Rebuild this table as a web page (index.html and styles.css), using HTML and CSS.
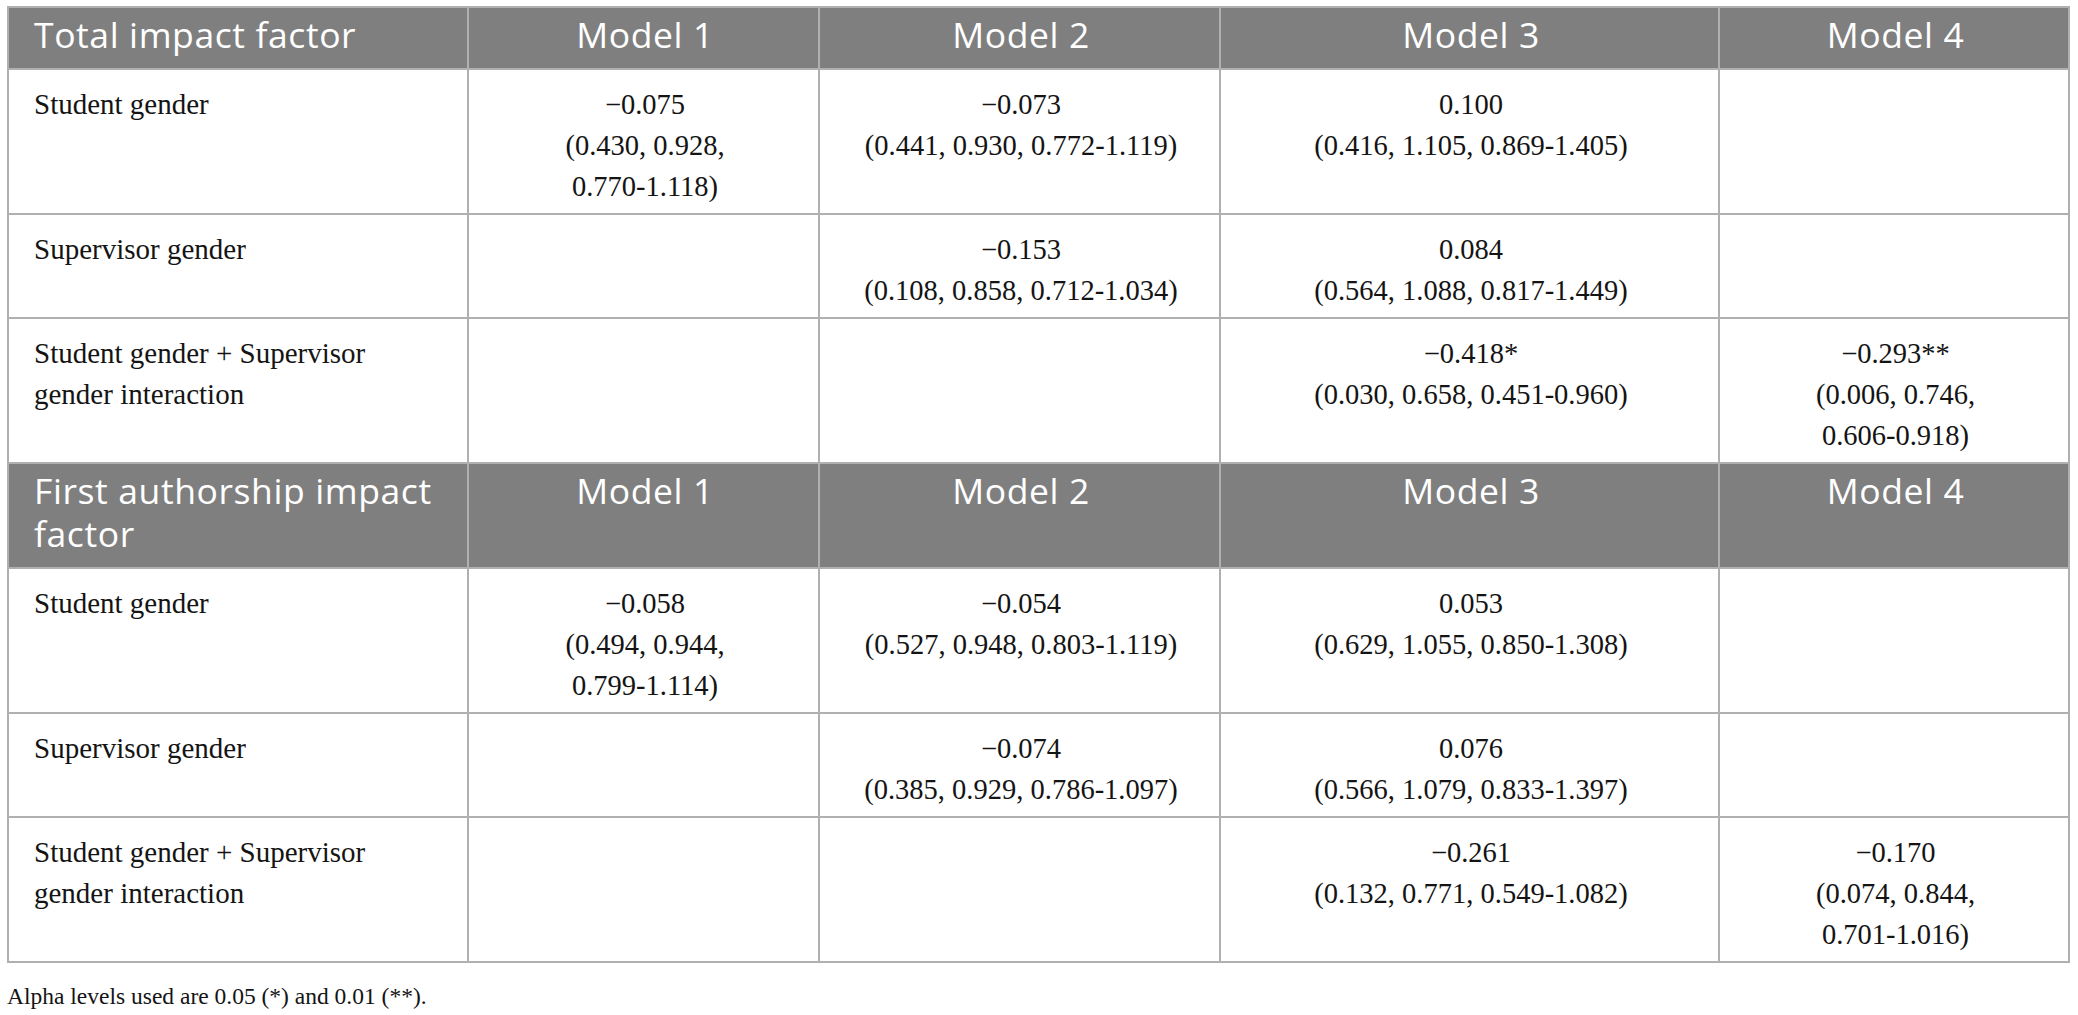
FILE: index.html
```html
<!DOCTYPE html>
<html>
<head>
<meta charset="utf-8">
<link rel="stylesheet" href="styles.css">
</head>
<body>
<table class="tbl">
  <colgroup>
    <col class="c-label">
    <col class="c-m1">
    <col class="c-m2">
    <col class="c-m3">
    <col class="c-m4">
  </colgroup>
  <tbody>
    <tr class="head">
      <th class="lab">Total impact factor</th>
      <th>Model 1</th>
      <th>Model 2</th>
      <th>Model 3</th>
      <th>Model 4</th>
    </tr>
    <tr>
      <td class="lab">Student gender</td>
      <td>&minus;0.075<br>(0.430, 0.928, <span class="nw">0.770-1.118)</span></td>
      <td>&minus;0.073<br>(0.441, 0.930, <span class="nw">0.772-1.119)</span></td>
      <td>0.100<br>(0.416, 1.105, <span class="nw">0.869-1.405)</span></td>
      <td></td>
    </tr>
    <tr>
      <td class="lab">Supervisor gender</td>
      <td></td>
      <td>&minus;0.153<br>(0.108, 0.858, <span class="nw">0.712-1.034)</span></td>
      <td>0.084<br>(0.564, 1.088, <span class="nw">0.817-1.449)</span></td>
      <td></td>
    </tr>
    <tr>
      <td class="lab">Student gender + Supervisor gender interaction</td>
      <td></td>
      <td></td>
      <td>&minus;0.418*<br>(0.030, 0.658, <span class="nw">0.451-0.960)</span></td>
      <td>&minus;0.293**<br>(0.006, 0.746, <span class="nw">0.606-0.918)</span></td>
    </tr>
    <tr class="head">
      <th class="lab">First authorship impact factor</th>
      <th>Model 1</th>
      <th>Model 2</th>
      <th>Model 3</th>
      <th>Model 4</th>
    </tr>
    <tr>
      <td class="lab">Student gender</td>
      <td>&minus;0.058<br>(0.494, 0.944, <span class="nw">0.799-1.114)</span></td>
      <td>&minus;0.054<br>(0.527, 0.948, <span class="nw">0.803-1.119)</span></td>
      <td>0.053<br>(0.629, 1.055, <span class="nw">0.850-1.308)</span></td>
      <td></td>
    </tr>
    <tr>
      <td class="lab">Supervisor gender</td>
      <td></td>
      <td>&minus;0.074<br>(0.385, 0.929, <span class="nw">0.786-1.097)</span></td>
      <td>0.076<br>(0.566, 1.079, <span class="nw">0.833-1.397)</span></td>
      <td></td>
    </tr>
    <tr>
      <td class="lab">Student gender + Supervisor gender interaction</td>
      <td></td>
      <td></td>
      <td>&minus;0.261<br>(0.132, 0.771, <span class="nw">0.549-1.082)</span></td>
      <td>&minus;0.170<br>(0.074, 0.844, <span class="nw">0.701-1.016)</span></td>
    </tr>
  </tbody>
</table>
<p class="note">Alpha levels used are 0.05 (*) and 0.01 (**).</p>
</body>
</html>
```
FILE: styles.css
```css
html, body {
  background: #ffffff;
}
body {
  margin: 0;
  padding: 6px 8px 0 7px;
  font-family: "Liberation Serif", "Times New Roman", serif;
  color: #141414;
}
.tbl {
  width: 2061px;
  table-layout: fixed;
  border-collapse: collapse;
  border: 2px solid #b0b0b0;
}
.c-label { width: 460px; }
.c-m1 { width: 351px; }
.c-m2 { width: 401px; }
.c-m3 { width: 499px; }
.c-m4 { width: 350px; }
.tbl td, .tbl th {
  border: 2px solid #b0b0b0;
  padding: 14px 22px 6px 25px;
  vertical-align: top;
  text-align: center;
}
.tbl td {
  font-size: 28.5px;
  line-height: 41px;
}
.tbl td.lab {
  font-size: 29px;
  padding-right: 32px;
}
.tbl th {
  background: #7f7f7f;
  color: #ffffff;
  font-family: "Open Sans", "Noto Sans", sans-serif;
  font-weight: 400;
  font-size: 35.5px;
  letter-spacing: 0.6px;
  line-height: 43px;
  padding-top: 5px;
  padding-bottom: 12px;
}
.tbl .lab {
  text-align: left;
}
.nw {
  white-space: nowrap;
}
.note {
  margin: 18px 0 0 0;
  font-size: 23.5px;
  line-height: 30px;
  color: #141414;
}
```
